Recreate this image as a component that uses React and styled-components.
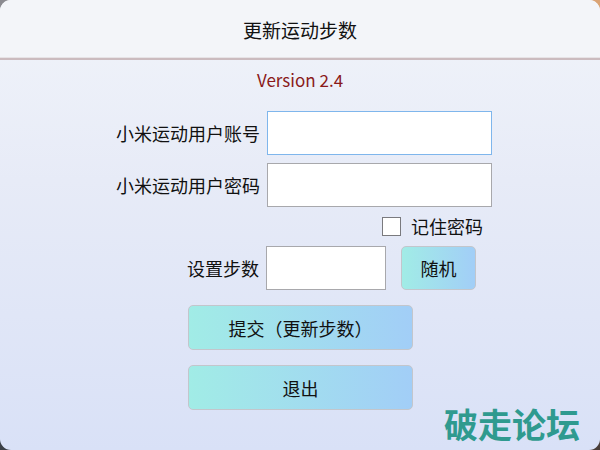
import React from "react";
import styled, { createGlobalStyle } from "styled-components";

const Global = createGlobalStyle`
  html, body { margin: 0; padding: 0; }
  body {
    width: 600px;
    height: 450px;
    overflow: hidden;
    background:
      linear-gradient(90deg, #8b8b91, #dba475) top / 100% 50% no-repeat,
      linear-gradient(90deg, #3b4047, #4a3e38) bottom / 100% 50% no-repeat;
    font-family: "Noto Sans CJK SC", "Noto Sans", sans-serif;
  }
`;

const Window = styled.div`
  position: relative;
  width: 600px;
  height: 450px;
  border-radius: 11px;
  overflow: hidden;
  background: linear-gradient(180deg, #f1f4fa 0%, #e7ebf7 40%, #d9e1f7 100%);
  display: flex;
  flex-direction: column;
`;

const TitleBar = styled.div`
  height: 58px;
  flex: none;
  display: flex;
  align-items: center;
  justify-content: center;
  background: #f3f5f9;
  border-bottom: 2px solid #cbbbbf;
  box-shadow: inset 0 -1px 0 #e6e3e6;
  font-size: 19px;
  color: #111;
`;

const Version = styled.div`
  margin-top: 8px;
  height: 24px;
  line-height: 24px;
  text-align: center;
  color: #8a1a1a;
  font-size: 17px;
`;

const Row = styled.div`
  display: flex;
  align-items: center;
  margin-top: ${(p) => p.$mt}px;
  padding-left: ${(p) => p.$pl}px;
  gap: ${(p) => p.$gap || 0}px;
  line-height: 20px;
`;

const Label = styled.label`
  width: ${(p) => p.$w}px;
  text-align: right;
  font-size: 18px;
  color: #111;
  white-space: nowrap;
`;

const Input = styled.input`
  box-sizing: border-box;
  width: ${(p) => p.$w}px;
  height: ${(p) => p.$h || 44}px;
  border: 1.5px solid ${(p) => (p.$focused ? "#7fb6ec" : "#a8a8ac")};
  background: #fff;
  outline: none;
  margin: 0;
  padding: 0 6px;
  font-size: 16px;
`;

const CheckBox = styled.span`
  box-sizing: border-box;
  width: 19px;
  height: 19px;
  border: 1.5px solid #7a7a7e;
  background: #fff;
`;

const CheckText = styled.span`
  font-size: 18px;
  line-height: 19px;
  color: #111;
`;

const Button = styled.button`
  box-sizing: border-box;
  width: ${(p) => p.$w}px;
  height: ${(p) => p.$h}px;
  margin-left: ${(p) => p.$ml || 0}px;
  border: 1.5px solid #c3c6cc;
  border-radius: 5px;
  background: linear-gradient(90deg, #a1ece6 0%, #a2cef7 100%);
  font-family: inherit;
  font-size: 18px;
  color: #111;
  padding: 0;
`;

const Watermark = styled.div`
  position: absolute;
  right: 20px;
  bottom: 2px;
  font-size: 34px;
  font-weight: 700;
  color: #2f9a8f;
`;

export default function App() {
  return (
    <>
      <Global />
      <Window>
        <TitleBar>更新运动步数</TitleBar>
        <Version>Version 2.4</Version>
        <Row $mt={19} $pl={100} $gap={7}>
          <Label $w={160}>小米运动用户账号</Label>
          <Input $w={225} $focused />
        </Row>
        <Row $mt={8} $pl={100} $gap={7}>
          <Label $w={160}>小米运动用户密码</Label>
          <Input $w={225} type="password" />
        </Row>
        <Row $mt={10} $pl={382} $gap={10}>
          <CheckBox />
          <CheckText>记住密码</CheckText>
        </Row>
        <Row $mt={10} $pl={100} $gap={7}>
          <Label $w={159}>设置步数</Label>
          <Input $w={120} $h={44} />
          <Button $w={75} $h={44} $ml={8}>随机</Button>
        </Row>
        <Row $mt={15} $pl={188}>
          <Button $w={225} $h={45}>提交（更新步数）</Button>
        </Row>
        <Row $mt={15} $pl={188}>
          <Button $w={225} $h={45}>退出</Button>
        </Row>
        <Watermark>破走论坛</Watermark>
      </Window>
    </>
  );
}
